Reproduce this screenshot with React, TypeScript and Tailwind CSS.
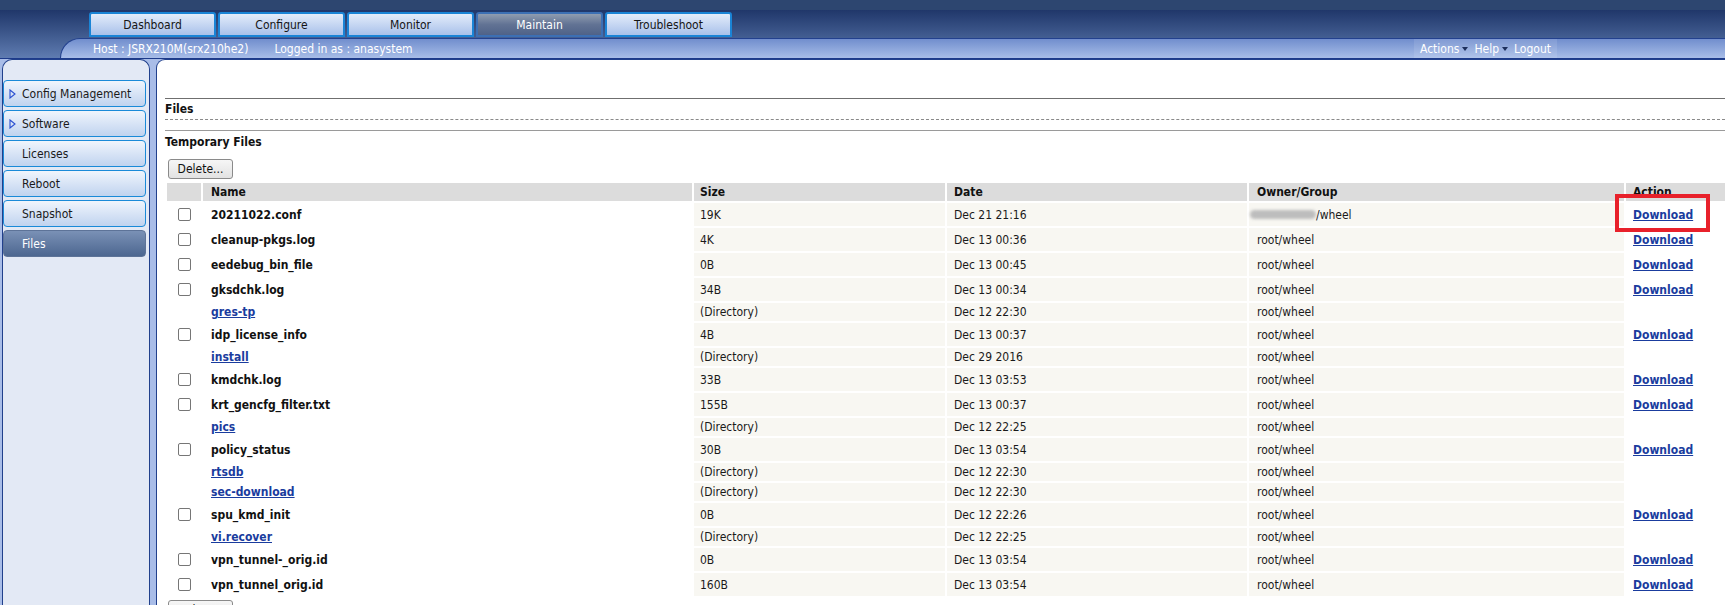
import React from 'react';

type Entry = {
  name: string;
  size: string;
  date: string;
  dir?: boolean;
  blurred?: boolean;
};

const TABS = ['Dashboard', 'Configure', 'Monitor', 'Maintain', 'Troubleshoot'];

const MENU = [
  { label: 'Config Management', arrow: true },
  { label: 'Software', arrow: true },
  { label: 'Licenses' },
  { label: 'Reboot' },
  { label: 'Snapshot' },
  { label: 'Files', active: true },
];

const FILES: Entry[] = [
  { name: '20211022.conf', size: '19K', date: 'Dec 21 21:16', blurred: true },
  { name: 'cleanup-pkgs.log', size: '4K', date: 'Dec 13 00:36' },
  { name: 'eedebug_bin_file', size: '0B', date: 'Dec 13 00:45' },
  { name: 'gksdchk.log', size: '34B', date: 'Dec 13 00:34' },
  { name: 'gres-tp', size: '(Directory)', date: 'Dec 12 22:30', dir: true },
  { name: 'idp_license_info', size: '4B', date: 'Dec 13 00:37' },
  { name: 'install', size: '(Directory)', date: 'Dec 29 2016', dir: true },
  { name: 'kmdchk.log', size: '33B', date: 'Dec 13 03:53' },
  { name: 'krt_gencfg_filter.txt', size: '155B', date: 'Dec 13 00:37' },
  { name: 'pics', size: '(Directory)', date: 'Dec 12 22:25', dir: true },
  { name: 'policy_status', size: '30B', date: 'Dec 13 03:54' },
  { name: 'rtsdb', size: '(Directory)', date: 'Dec 12 22:30', dir: true },
  { name: 'sec-download', size: '(Directory)', date: 'Dec 12 22:30', dir: true },
  { name: 'spu_kmd_init', size: '0B', date: 'Dec 12 22:26' },
  { name: 'vi.recover', size: '(Directory)', date: 'Dec 12 22:25', dir: true },
  { name: 'vpn_tunnel-_orig.id', size: '0B', date: 'Dec 13 03:54' },
  { name: 'vpn_tunnel_orig.id', size: '160B', date: 'Dec 13 03:54' },
];

const FONT = "font-['DejaVu_Sans_Condensed','Liberation_Sans',sans-serif]";

function Checkbox() {
  return (
    <input
      type="checkbox"
      className="m-0 mx-auto block h-[13px] w-[13px] appearance-none rounded-[2px] border border-[#767676] bg-white"
    />
  );
}

function Caret() {
  return (
    <span className="ml-[3px] mr-[6px] inline-block h-0 w-0 border-x-[3px] border-t-[4px] border-x-transparent border-t-[#1d2f5c]" />
  );
}

function DeleteButton() {
  return (
    <button className="flex h-[20px] w-[65px] items-center justify-center rounded-[3px] border border-[#8a8a8a] bg-gradient-to-b from-[#f6f6f6] to-[#e2e2e2] text-[12px] leading-none text-[#111]">
      Delete...
    </button>
  );
}

export default function App() {
  return (
    <div className={`relative h-[605px] w-[1725px] overflow-hidden bg-[#a9bde8] ${FONT}`}>
      {/* header */}
      <div className="h-[10px] bg-[#2d4670]" />
      <div className="bg-gradient-to-b from-[#20376a] to-[#5f7cb1]">
        <div className="flex h-[28px] items-start gap-[2px] pl-[89px] pt-[2px]">
          {TABS.map((t) => (
            <div
              key={t}
              className={
                t === 'Maintain'
                  ? 'flex h-[25px] w-[127px] items-center justify-center rounded-t-[3px] border-2 border-[#3c6fb4] bg-gradient-to-b from-[#909cb0] via-[#627394] to-[#4f6288] text-[12px] text-white'
                  : 'flex h-[25px] w-[127px] items-center justify-center rounded-t-[3px] border-2 border-[#1a84d6] bg-gradient-to-b from-[#e3ecfa] to-[#a9c1ea] text-[12px] text-[#151515]'
              }
            >
              {t}
            </div>
          ))}
        </div>
        <div className="ml-[60px] flex h-[20px] items-center rounded-tl-[22px] border-l border-t border-[#23418e] bg-gradient-to-b from-[#718ecd] to-[#a8bde8] pl-[32px] text-[12px] text-white">
          <span>Host : JSRX210M(srx210he2)</span>
          <span className="ml-[26px]">Logged in as : anasystem</span>
          <div className="ml-auto mr-[168px] flex h-full items-center bg-white/10 px-[6px]">
            <span>Actions</span>
            <Caret />
            <span>Help</span>
            <Caret />
            <span>Logout</span>
          </div>
        </div>
      </div>
      <div className="h-px bg-[#1d3a8a]" />

      {/* body */}
      <div className="flex h-[546px]">
        <aside className="ml-[2px] w-[148px] rounded-t-[10px] border border-b-0 border-[#21408c] bg-[#e3e9f5] pt-[20px]">
          <div className="flex flex-col gap-[3px]">
            {MENU.map((m) => (
              <div
                key={m.label}
                className={
                  m.active
                    ? 'flex h-[27px] w-[143px] items-center rounded-[4px] border border-[#5d7398] bg-gradient-to-b from-[#7a91b6] to-[#4d6790] pl-[18px] text-[12px] text-white'
                    : 'flex h-[27px] w-[143px] items-center rounded-[4px] border border-[#1a8ad8] bg-gradient-to-b from-[#f0f5fc] to-[#c0d3ef] pl-[18px] text-[12px] text-[#1a1a1a]'
                }
              >
                {m.arrow && (
                  <svg width="7" height="10" viewBox="0 0 7 10" className="-ml-[13px] mr-[6px]">
                    <polygon points="1,1 6,5 1,9" fill="none" stroke="#2a4fd0" strokeWidth="1.1" />
                  </svg>
                )}
                <span>{m.label}</span>
              </div>
            ))}
          </div>
        </aside>

        <main className="ml-[6px] flex-1 overflow-hidden rounded-tl-[9px] border-l border-t border-[#21408c] bg-white pl-[8px] pt-[38px]">
          <div className="border-t border-[#6f6f6f]" />
          <div className="flex h-[20px] items-center text-[12px] font-bold text-[#111]">Files</div>
          <div className="border-t border-dashed border-[#8a8a8a]" />
          <div className="mt-[10px] border-t border-[#9a9a9a]" />
          <div className="flex h-[22px] items-center text-[12px] font-bold text-[#111]">Temporary Files</div>
          <div className="mt-[6px] flex pl-[3px]">
            <DeleteButton />
          </div>

          <table className="mt-[2px] w-[1573px] table-fixed border-separate border-spacing-[2px] text-[12px] leading-[14px]">
            <colgroup>
              <col className="w-[34px]" />
              <col className="w-[489px]" />
              <col className="w-[251px]" />
              <col className="w-[300px]" />
              <col className="w-[375px]" />
              <col className="w-[110px]" />
            </colgroup>
            <thead>
              <tr className="h-[18px] bg-[#dcdcdc] text-left font-bold text-[#111]">
                <th />
                <th className="pl-[8px]">Name</th>
                <th className="pl-[6px]">Size</th>
                <th className="pl-[7px]">Date</th>
                <th className="pl-[8px]">Owner/Group</th>
                <th className="pl-[7px]">Action</th>
              </tr>
            </thead>
            <tbody>
              {FILES.map((f) => (
                <tr key={f.name} className={f.dir ? 'h-[18px]' : 'h-[23px]'}>
                  <td>{!f.dir && <Checkbox />}</td>
                  <td className="pl-[8px] font-bold">
                    {f.dir ? (
                      <a href="#" className="text-[#1a3c9e] underline">
                        {f.name}
                      </a>
                    ) : (
                      <span className="text-[#111]">{f.name}</span>
                    )}
                  </td>
                  <td className="bg-[#f8f7f2] pl-[6px] text-[#1a1a1a]">{f.size}</td>
                  <td className="bg-[#f8f7f2] pl-[7px] text-[#1a1a1a]">{f.date}</td>
                  <td className="bg-[#f8f7f2] pl-[1px] text-[#1a1a1a]">
                    {f.blurred ? (
                      <span className="flex items-center">
                        <span className="inline-block h-[9px] w-[66px] rounded-full bg-[#bdbdbd] blur-[1.5px]" />
                        <span>/wheel</span>
                      </span>
                    ) : (
                      <span className="pl-[7px]">root/wheel</span>
                    )}
                  </td>
                  <td className="pl-[7px]">
                    {!f.dir && (
                      <a href="#" className="font-bold text-[#1a3c9e] underline">
                        Download
                      </a>
                    )}
                  </td>
                </tr>
              ))}
            </tbody>
          </table>
          <div className="mt-[2px] flex pl-[3px]">
            <DeleteButton />
          </div>
        </main>
      </div>

      {/* annotation */}
      <div className="absolute left-[1615px] top-[194px] h-[38px] w-[95px] border-[4px] border-[#e8212b]" />
    </div>
  );
}
